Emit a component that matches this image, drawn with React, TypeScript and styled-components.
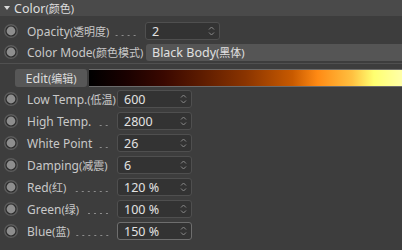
import React from "react";
import styled, { createGlobalStyle } from "styled-components";

const GlobalStyle = createGlobalStyle`
  html, body {
    margin: 0;
    padding: 0;
    background: #3d3d3d;
  }
  body {
    font-family: "Noto Sans", "Noto Sans CJK SC", sans-serif;
    font-size: 12px;
    color: #c8c8c8;
  }
`;

const Panel = styled.div`
  width: 402px;
  height: 250px;
  background: #3d3d3d;
  display: flex;
  flex-direction: column;
  overflow: hidden;
`;

const Header = styled.div`
  height: 16px;
  background: #4a4a4a;
  display: flex;
  align-items: center;
  padding-left: 4px;
  gap: 3px;
  color: #dedede;
  font-size: 12.5px;
`;

const Caret = styled.span`
  width: 0;
  height: 0;
  border-left: 3px solid transparent;
  border-right: 3px solid transparent;
  border-top: 4px solid #d8d8d8;
  margin-right: 1px;
`;

const Group = styled.div<{ $gap: number; $top: number }>`
  display: flex;
  flex-direction: column;
  gap: ${(p) => p.$gap}px;
  margin-top: ${(p) => p.$top}px;
`;

const Row = styled.div`
  height: 18px;
  display: flex;
  align-items: center;
  padding-left: 4px;
`;

const Label = styled.div<{ $width: number }>`
  width: ${(p) => p.$width}px;
  margin-left: 9px;
  display: flex;
  align-items: center;
  white-space: nowrap;
  color: #c8c8c8;
  flex-shrink: 0;
`;

const Cjk = styled.span`
  font-size: 11px;
`;

const Leader = styled.span`
  flex: 1;
  align-self: stretch;
  margin: 0 7px 0 6px;
  background-image: radial-gradient(circle, #8c8c8c 0.6px, transparent 1.1px);
  background-size: 6px 3px;
  background-repeat: repeat-x;
  background-position: right bottom 3px;
`;

const NumberBox = styled.div<{ $focus?: boolean }>`
  width: 75px;
  height: 18px;
  box-sizing: border-box;
  background: #333333;
  border: 1px solid ${(p) => (p.$focus ? "#6e6e6e" : "#4f4f4f")};
  border-radius: 3px;
  display: flex;
  align-items: center;
  padding: 0 4px 0 6px;
  color: #e2e2e2;
  font-size: 12.5px;
`;

const Value = styled.span`
  flex: 1;
`;

const Select = styled.div`
  flex: 1;
  height: 17px;
  margin-left: 1px;
  background: #555555;
  border-radius: 3px 0 0 3px;
  display: flex;
  align-items: center;
  padding-left: 6px;
  color: #e0e0e0;
  font-size: 12.5px;
`;

const Divider = styled.div`
  height: 1px;
  background: #505050;
  margin-top: 2px;
`;

const EditRow = styled.div`
  height: 18px;
  display: flex;
  align-items: stretch;
  margin-top: 5px;
  padding-left: 15px;
  gap: 2px;
`;

const EditButton = styled.div`
  width: 72px;
  background: #575757;
  border-radius: 3px;
  display: flex;
  align-items: center;
  justify-content: center;
  color: #dcdcdc;
  font-size: 12.5px;
`;

const Ramp = styled.div`
  flex: 1;
  box-sizing: border-box;
  border-top: 1px solid #6a6a6a;
  border-bottom: 1px solid #6a6a6a;
  background: linear-gradient(
    to right,
    #000000 0%,
    #1a0100 12%,
    #3a0800 24%,
    #5a1a00 35%,
    #8a3400 50%,
    #c85a00 65%,
    #ff8a14 73%,
    #ffc040 84%,
    #ffff70 91%,
    #ffffa8 100%
  );
`;

const Toggle = () => (
  <svg width="14" height="14" viewBox="0 0 14 14">
    <circle cx="7" cy="7" r="7" fill="#5c5c5c" />
    <circle cx="7" cy="7" r="5.6" fill="#2a2a2a" />
    <circle cx="7" cy="7" r="4.4" fill="#8e8e8e" />
  </svg>
);

const Spinner = () => (
  <svg width="7" height="12" viewBox="0 0 7 12" fill="none" stroke="#8a8a8a" strokeWidth="1">
    <path d="M1 4.5 L3.5 2 L6 4.5" />
    <path d="M1 7.5 L3.5 10 L6 7.5" />
  </svg>
);

type Field = { en: string; zh?: string; value: string; leader?: boolean; focus?: boolean };

const fields: Field[] = [
  { en: "Low Temp.", zh: "(低温)", value: "600" },
  { en: "High Temp.", value: "2800", leader: true },
  { en: "White Point", value: "26", leader: true },
  { en: "Damping", zh: "(减震)", value: "6" },
  { en: "Red", zh: "(红)", value: "120 %", leader: true },
  { en: "Green", zh: "(绿)", value: "100 %", leader: true },
  { en: "Blue", zh: "(蓝)", value: "150 %", leader: true, focus: true },
];

const Number = ({ value, focus }: { value: string; focus?: boolean }) => (
  <NumberBox $focus={focus}>
    <Value>{value}</Value>
    <Spinner />
  </NumberBox>
);

const App = () => {
  return (
    <Panel>
      <GlobalStyle />
      <Header>
        <Caret />
        <span>
          Color<Cjk>(颜色)</Cjk>
        </span>
      </Header>

      <Group $gap={3} $top={6}>
        <Row>
          <Toggle />
          <Label $width={118}>
            Opacity<Cjk>(透明度)</Cjk>
            <Leader />
          </Label>
          <Number value="2" />
        </Row>
        <Row>
          <Toggle />
          <Label $width={118}>
            Color Mode<Cjk>(颜色模式)</Cjk>
          </Label>
          <Select>
            Black Body<Cjk>(黑体)</Cjk>
          </Select>
        </Row>
      </Group>

      <Divider />

      <EditRow>
        <EditButton>
          Edit<Cjk>(编辑)</Cjk>
        </EditButton>
        <Ramp />
      </EditRow>

      <Group $gap={4} $top={3}>
        {fields.map((f) => (
          <Row key={f.en}>
            <Toggle />
            <Label $width={90}>
              {f.en}
              {f.zh && <Cjk>{f.zh}</Cjk>}
              {f.leader && <Leader />}
            </Label>
            <Number value={f.value} focus={f.focus} />
          </Row>
        ))}
      </Group>
    </Panel>
  );
};

export default App;
